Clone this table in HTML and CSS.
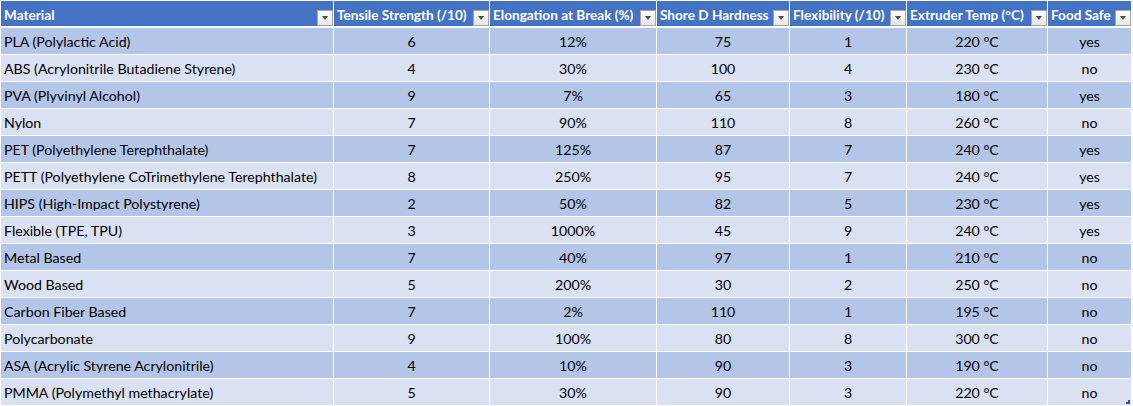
FILE: index.html
```html
<!DOCTYPE html>
<html>
<head>
<meta charset="utf-8">
<link rel="stylesheet" href="styles.css">
</head>
<body>
<div class="sheet">
  <div class="grid">
    <div class="h">Material<span class="fb"></span></div>
    <div class="h">Tensile Strength (/10)<span class="fb"></span></div>
    <div class="h">Elongation at Break (%)<span class="fb"></span></div>
    <div class="h">Shore D Hardness<span class="fb"></span></div>
    <div class="h">Flexibility (/10)<span class="fb"></span></div>
    <div class="h">Extruder Temp (°C)<span class="fb"></span></div>
    <div class="h">Food Safe<span class="fb"></span></div>

    <div class="c l d">PLA (Polylactic Acid)</div><div class="c d">6</div><div class="c d">12%</div><div class="c d">75</div><div class="c d">1</div><div class="c d">220 °C</div><div class="c d">yes</div>
    <div class="c l">ABS (Acrylonitrile Butadiene Styrene)</div><div class="c">4</div><div class="c">30%</div><div class="c">100</div><div class="c">4</div><div class="c">230 °C</div><div class="c">no</div>
    <div class="c l d">PVA (Plyvinyl Alcohol)</div><div class="c d">9</div><div class="c d">7%</div><div class="c d">65</div><div class="c d">3</div><div class="c d">180 °C</div><div class="c d">yes</div>
    <div class="c l">Nylon</div><div class="c">7</div><div class="c">90%</div><div class="c">110</div><div class="c">8</div><div class="c">260 °C</div><div class="c">no</div>
    <div class="c l d">PET (Polyethylene Terephthalate)</div><div class="c d">7</div><div class="c d">125%</div><div class="c d">87</div><div class="c d">7</div><div class="c d">240 °C</div><div class="c d">yes</div>
    <div class="c l">PETT (Polyethylene CoTrimethylene Terephthalate)</div><div class="c">8</div><div class="c">250%</div><div class="c">95</div><div class="c">7</div><div class="c">240 °C</div><div class="c">yes</div>
    <div class="c l d">HIPS (High-Impact Polystyrene)</div><div class="c d">2</div><div class="c d">50%</div><div class="c d">82</div><div class="c d">5</div><div class="c d">230 °C</div><div class="c d">yes</div>
    <div class="c l">Flexible (TPE, TPU)</div><div class="c">3</div><div class="c">1000%</div><div class="c">45</div><div class="c">9</div><div class="c">240 °C</div><div class="c">yes</div>
    <div class="c l d">Metal Based</div><div class="c d">7</div><div class="c d">40%</div><div class="c d">97</div><div class="c d">1</div><div class="c d">210 °C</div><div class="c d">no</div>
    <div class="c l">Wood Based</div><div class="c">5</div><div class="c">200%</div><div class="c">30</div><div class="c">2</div><div class="c">250 °C</div><div class="c">no</div>
    <div class="c l d">Carbon Fiber Based</div><div class="c d">7</div><div class="c d">2%</div><div class="c d">110</div><div class="c d">1</div><div class="c d">195 °C</div><div class="c d">no</div>
    <div class="c l">Polycarbonate</div><div class="c">9</div><div class="c">100%</div><div class="c">80</div><div class="c">8</div><div class="c">300 °C</div><div class="c">no</div>
    <div class="c l d">ASA (Acrylic Styrene Acrylonitrile)</div><div class="c d">4</div><div class="c d">10%</div><div class="c d">90</div><div class="c d">3</div><div class="c d">190 °C</div><div class="c d">no</div>
    <div class="c l">PMMA (Polymethyl methacrylate)</div><div class="c">5</div><div class="c">30%</div><div class="c">90</div><div class="c">3</div><div class="c">220 °C</div><div class="c">no<span class="handle"></span></div>
  </div>
</div>
</body>
</html>
```
FILE: styles.css
```css
html, body {
  margin: 0;
  padding: 0;
  background: #ffffff;
}
.sheet {
  padding: 1px 0 0 1px;
  font-family: "Lato", "Liberation Sans", sans-serif;
  font-size: 14.2px;
  color: #000;
}
.grid {
  display: grid;
  grid-template-columns: 332px 155px 166px 132px 116px 140px 83px;
  grid-template-rows: 26px repeat(14, 26px);
  column-gap: 1px;
  row-gap: 1px;
  width: 1130px;
}
.h {
  background: #4472c4;
  color: #fff;
  font-weight: bold;
  font-size: 13.6px;
  display: flex;
  align-items: flex-end;
  padding: 0 0 3px 3px;
  position: relative;
  white-space: nowrap;
  overflow: hidden;
  margin-bottom: 1px;
}
.fb {
  position: absolute;
  right: 0;
  bottom: 0;
  width: 14px;
  height: 14px;
  border: 1px solid #a6a6a6;
  background: linear-gradient(#ffffff, #e6e6e6);
}
.fb::after {
  content: "";
  position: absolute;
  left: 4px;
  top: 5px;
  border-left: 3.5px solid transparent;
  border-right: 3.5px solid transparent;
  border-top: 4px solid #4d4d4d;
}
.c {
  background: #d9e1f2;
  display: flex;
  align-items: center;
  justify-content: center;
  white-space: nowrap;
  position: relative;
}
.c.d {
  background: #b4c6e7;
}
.c.l {
  justify-content: flex-start;
  padding-left: 3px;
}
.handle {
  position: absolute;
  right: 1px;
  bottom: 1px;
  width: 4px;
  height: 4px;
  background: #2f5597;
  clip-path: polygon(100% 0, 100% 100%, 0 100%, 0 50%, 50% 50%, 50% 0);
}
```
